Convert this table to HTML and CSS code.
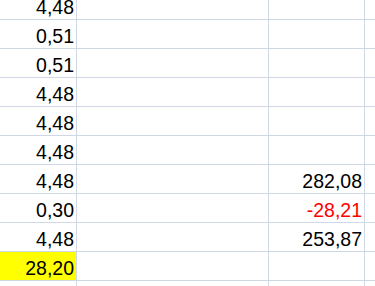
FILE: index.html
```html
<!DOCTYPE html>
<html>
<head>
<meta charset="utf-8">
<link rel="stylesheet" href="styles.css">
</head>
<body>
<div class="sheet">
  <div class="cell num">4,48</div><div class="cell"></div><div class="cell"></div><div class="cell"></div>
  <div class="cell num">0,51</div><div class="cell"></div><div class="cell"></div><div class="cell"></div>
  <div class="cell num">0,51</div><div class="cell"></div><div class="cell"></div><div class="cell"></div>
  <div class="cell num">4,48</div><div class="cell"></div><div class="cell"></div><div class="cell"></div>
  <div class="cell num">4,48</div><div class="cell"></div><div class="cell"></div><div class="cell"></div>
  <div class="cell num">4,48</div><div class="cell"></div><div class="cell"></div><div class="cell"></div>
  <div class="cell num">4,48</div><div class="cell"></div><div class="cell num">282,08</div><div class="cell"></div>
  <div class="cell num">0,30</div><div class="cell"></div><div class="cell num neg">-28,21</div><div class="cell"></div>
  <div class="cell num">4,48</div><div class="cell"></div><div class="cell num">253,87</div><div class="cell"></div>
  <div class="cell num hl">28,20</div><div class="cell"></div><div class="cell"></div><div class="cell"></div>
  <div class="cell"></div><div class="cell"></div><div class="cell"></div><div class="cell"></div>
</div>
</body>
</html>
```
FILE: styles.css
```css
html, body {
  margin: 0;
  padding: 0;
  background: #ffffff;
  overflow: hidden;
}
.sheet {
  display: grid;
  grid-template-columns: 76px 191px 95px 1fr;
  grid-auto-rows: 28px;
  gap: 1px;
  background: #d0d7e5;
  margin-top: -9px;
  width: 375px;
  font-family: "Liberation Sans", Arial, sans-serif;
  font-size: 19.5px;
  color: #000000;
}
.cell {
  background: #ffffff;
  box-sizing: border-box;
  height: 28px;
  padding: 4px 2px 0 0;
  line-height: 24px;
  white-space: nowrap;
}
.num {
  text-align: right;
}
.neg {
  color: #ff0000;
}
.hl {
  background: #ffff00;
}
```
